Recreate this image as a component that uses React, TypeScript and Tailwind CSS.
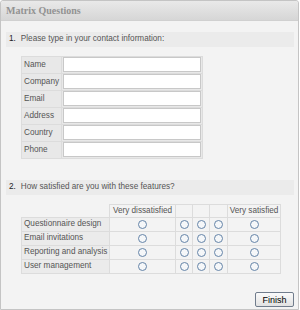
import React from "react";

const fields = ["Name", "Company", "Email", "Address", "Country", "Phone"];
const rows = ["Questionnaire design", "Email invitations", "Reporting and analysis", "User management"];
const colW = ["w-[66px]", "w-[17px]", "w-[17px]", "w-[18px]", "w-[53px]"];

function Radio() {
  return <span className="block w-[9px] h-[9px] rounded-full border-[1.5px] border-[#6584a8] bg-[#f5f7f9]" />;
}

export default function App() {
  return (
    <div className="w-[300px] h-[310px] bg-white" style={{ fontFamily: '"Liberation Sans", Arial, sans-serif' }}>
      <div className="w-[299px] h-[310px] border border-[#c4c4c4] rounded-t-[3px] bg-[#f3f3f3] flex flex-col">
        <div className="h-[20px] shrink-0 bg-gradient-to-b from-[#e9e9e9] to-[#d6d6d6] border-b border-[#d0d0d0] flex items-center px-[5px] rounded-t-[3px]">
          <span className="text-[10px] font-bold text-[#929292]" style={{ fontFamily: '"Liberation Serif", "Times New Roman", serif' }}>Matrix Questions</span>
        </div>
        <div className="flex flex-col pl-[5px] pr-[4px] pt-[11px] text-[8.2px] text-[#555]">
          <div className="h-[15px] bg-[#ebebeb] flex items-center pl-[3px]">
            <span className="text-[#222] mr-[5px]">1.</span>
            <span>Please type in your contact information:</span>
          </div>
          <div className="ml-[15px] mt-[9px] w-[182px] border-l border-t border-[#dcdcdc] flex flex-col">
            {fields.map((f) => (
              <div key={f} className="flex h-[17px]">
                <div className="w-[40px] h-[17px] border-r border-b border-[#dcdcdc] bg-[#e8e8e8] flex items-center px-[2px] text-[#555]">{f}</div>
                <div className="flex-1 h-[17px] border-r border-b border-[#dcdcdc] bg-[#e8e8e8] px-[1px]">
                  <div className="h-[15px] bg-white border border-[#c8c8c8]" />
                </div>
              </div>
            ))}
          </div>
          <div className="h-[15px] bg-[#ebebeb] flex items-center pl-[3px] mt-[21px]">
            <span className="text-[#222] mr-[5px]">2.</span>
            <span>How satisfied are you with these features?</span>
          </div>
          <div className="ml-[15px] mt-[9px] w-[260px] flex flex-col">
            <div className="flex h-[14px]">
              <div className="w-[89px] h-[14px] border-r border-b border-[#dcdcdc]" />
              <div className="w-[66px] h-[14px] border-r border-b border-t border-[#dcdcdc] flex items-center justify-center whitespace-nowrap">Very dissatisfied</div>
              <div className="w-[17px] h-[14px] border-r border-b border-t border-[#dcdcdc]" />
              <div className="w-[17px] h-[14px] border-r border-b border-t border-[#dcdcdc]" />
              <div className="w-[18px] h-[14px] border-r border-b border-t border-[#dcdcdc]" />
              <div className="w-[53px] h-[14px] border-r border-b border-t border-[#dcdcdc] flex items-center justify-center whitespace-nowrap">Very satisfied</div>
            </div>
            {rows.map((r) => (
              <div key={r} className="flex h-[14px]">
                <div className="w-[89px] h-[14px] border-l border-r border-b border-[#dcdcdc] bg-[#ebebeb] flex items-center px-[2px] whitespace-nowrap">{r}</div>
                {colW.map((w, i) => (
                  <div key={i} className={`${w} h-[14px] border-r border-b border-[#dcdcdc] flex items-center justify-center`}>
                    <Radio />
                  </div>
                ))}
              </div>
            ))}
          </div>
          <div className="flex justify-end mt-[18px]">
            <button className="h-[15px] w-[39px] border border-[#707c8c] rounded-[2px] bg-gradient-to-b from-[#fafafa] to-[#e2e2e2] text-[9px] leading-[12px] text-black p-0">Finish</button>
          </div>
        </div>
      </div>
    </div>
  );
}
